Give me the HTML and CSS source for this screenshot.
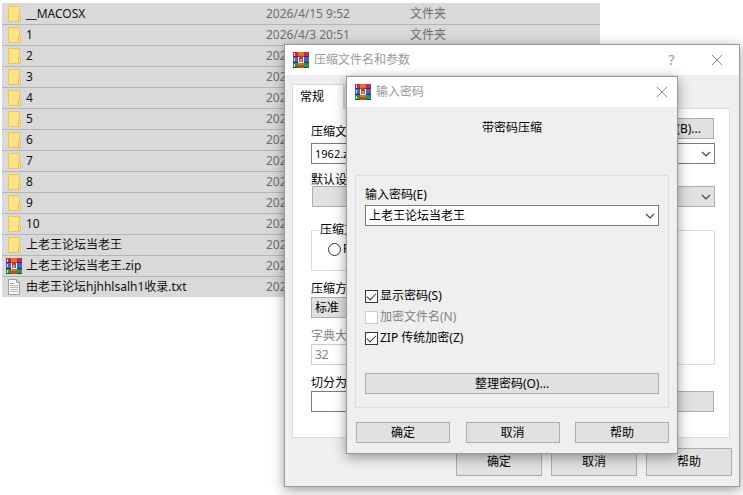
FILE: index.html
```html
<!DOCTYPE html>
<html lang="zh-CN">
<head>
    <meta charset="utf-8">
    <title>压缩文件名和参数</title>
    <link rel="stylesheet" href="styles.css">
</head>
<body>
    <svg class="defs" aria-hidden="true">
        <symbol id="folder" viewBox="0 0 16 16">
            <path d="M2.5 .5h11v9h1v6h-12z" fill="#fde38a" stroke="#efc64f"/>
            <path d="M12.5 15V10.5q0-1 1-1" fill="none" stroke="#e3b93f"/>
        </symbol>
        <symbol id="rar" viewBox="0 0 16 16">
            <rect width="16" height="5" fill="#c42a4c"/>
            <rect y="4" width="16" height="1" fill="#7d1535"/>
            <rect y="5" width="16" height="6" fill="#4462c8"/>
            <rect y="10" width="16" height="1" fill="#27305f"/>
            <rect y="11" width="16" height="5" fill="#27994a"/>
            <rect y="15" width="16" height="1" fill="#125a2c"/>
            <path d="M1 1h1v3H1zM1 6h1v3H1zM1 12h1v3H1z" fill="#e9d9c4"/>
            <rect x="5" width="6" height="16" fill="#e0702b"/>
            <rect x="5" y="13" width="6" height="3" fill="#a9561f"/>
            <rect x="5" y="4" width="6" height="7" fill="#a8452b"/>
            <path d="M5.500 5v5.500h5V5M8 7v3" fill="none" stroke="#fff"/>
        </symbol>
        <symbol id="txt" viewBox="0 0 16 16">
            <path d="M2.500 .5h8l3 3v12h-11z" fill="#fff" stroke="#9c9ca4"/>
            <path d="M10.500 .5v3h3" fill="none" stroke="#9c9ca4"/>
            <path d="M4 4.500h5M4 6.500h8M4 8.500h8M4 10.500h8M4 12.500h8" stroke="#b4b4ba"/>
        </symbol>
        <symbol id="close" viewBox="0 0 10 10">
            <path d="M0 0L10 10M10 0L0 10" stroke="#8c8c8c" fill="none"/>
        </symbol>
        <symbol id="chevron" viewBox="0 0 10 6">
            <path d="M1 1l4 4 4-4" stroke="#444" stroke-width="1.200" fill="none"/>
        </symbol>
    </svg>

    <div class="desktop">
        <div class="files">
            <table>
                <tr><td><span class="name"><svg><use href="#folder"/></svg>__MACOSX</span></td><td>2026/4/15 9:52</td><td>文件夹</td></tr>
                <tr><td><span class="name"><svg><use href="#folder"/></svg>1</span></td><td>2026/4/3 20:51</td><td>文件夹</td></tr>
                <tr><td><span class="name"><svg><use href="#folder"/></svg>2</span></td><td>202</td><td></td></tr>
                <tr><td><span class="name"><svg><use href="#folder"/></svg>3</span></td><td>202</td><td></td></tr>
                <tr><td><span class="name"><svg><use href="#folder"/></svg>4</span></td><td>202</td><td></td></tr>
                <tr><td><span class="name"><svg><use href="#folder"/></svg>5</span></td><td>202</td><td></td></tr>
                <tr><td><span class="name"><svg><use href="#folder"/></svg>6</span></td><td>202</td><td></td></tr>
                <tr><td><span class="name"><svg><use href="#folder"/></svg>7</span></td><td>202</td><td></td></tr>
                <tr><td><span class="name"><svg><use href="#folder"/></svg>8</span></td><td>202</td><td></td></tr>
                <tr><td><span class="name"><svg><use href="#folder"/></svg>9</span></td><td>202</td><td></td></tr>
                <tr><td><span class="name"><svg><use href="#folder"/></svg>10</span></td><td>202</td><td></td></tr>
                <tr><td><span class="name"><svg><use href="#folder"/></svg>上老王论坛当老王</span></td><td>202</td><td></td></tr>
                <tr><td><span class="name"><svg><use href="#rar"/></svg>上老王论坛当老王.zip</span></td><td>202</td><td></td></tr>
                <tr><td><span class="name"><svg><use href="#txt"/></svg>由老王论坛hjhhlsalh1收录.txt</span></td><td>202</td><td></td></tr>
            </table>
        </div>

        <section class="window archive">
            <header class="titlebar">
                <svg class="app-icon"><use href="#rar"/></svg>
                <span class="title">压缩文件名和参数</span>
                <button class="caption" type="button">?</button>
                <button class="caption" type="button" aria-label="关闭"><svg><use href="#close"/></svg></button>
            </header>
            <div class="archive-body">
                <div class="tabs">
                    <button class="tab active" type="button">常规</button>
                    <button class="tab" type="button" aria-label="高级"></button>
                </div>
                <div class="panel">
                    <div class="line browse-line">
                        <label for="archive-name">压缩文</label>
                        <button class="btn browse" type="button">(B)...</button>
                    </div>
                    <div class="combo">
                        <input id="archive-name" type="text" value="1962.z">
                        <button type="button" aria-label="展开"><svg><use href="#chevron"/></svg></button>
                    </div>
                    <div class="line profile-label">默认设</div>
                    <div class="line profiles">
                        <button class="btn" type="button" aria-label="配置"></button>
                        <div class="combo grey">
                            <input type="text" aria-label="更新方式" readonly>
                            <button type="button" aria-label="展开"><svg><use href="#chevron"/></svg></button>
                        </div>
                    </div>
                    <div class="columns">
                        <div class="left">
                            <fieldset class="format">
                                <legend>压缩文</legend>
                                <label><input type="radio" name="format">R</label>
                            </fieldset>
                            <label class="field-label" for="method">压缩方</label>
                            <select id="method" class="field grey"><option>标准</option></select>
                            <label class="field-label disabled" for="dict">字典大</label>
                            <select id="dict" class="field" disabled><option>32</option></select>
                        </div>
                        <div class="options"></div>
                    </div>
                    <label class="field-label" for="split">切分为</label>
                    <div class="line split-line">
                        <input id="split" class="field" type="text">
                        <button class="btn" type="button" aria-label="设置密码"></button>
                    </div>
                </div>
                <div class="actions">
                    <button class="btn" type="button">确定</button>
                    <button class="btn" type="button">取消</button>
                    <button class="btn" type="button">帮助</button>
                </div>
            </div>
        </section>

        <section class="window password">
            <header class="titlebar">
                <svg class="app-icon"><use href="#rar"/></svg>
                <span class="title">输入密码</span>
                <button class="caption" type="button" aria-label="关闭"><svg><use href="#close"/></svg></button>
            </header>
            <div class="password-body">
                <p class="heading">带密码压缩</p>
                <div class="group">
                    <label for="pwd">输入密码(E)</label>
                    <div class="combo">
                        <input id="pwd" type="text" value="上老王论坛当老王">
                        <button type="button" aria-label="展开"><svg><use href="#chevron"/></svg></button>
                    </div>
                    <div class="checks">
                        <label><input type="checkbox" checked>显示密码(S)</label>
                        <label class="disabled"><input type="checkbox" disabled>加密文件名(N)</label>
                        <label><input type="checkbox" checked>ZIP 传统加密(Z)</label>
                    </div>
                    <button class="btn organize" type="button">整理密码(O)...</button>
                </div>
                <div class="actions">
                    <button class="btn" type="button">确定</button>
                    <button class="btn" type="button">取消</button>
                    <button class="btn" type="button">帮助</button>
                </div>
            </div>
        </section>
    </div>
</body>
</html>
```
FILE: styles.css
```css
* { box-sizing: border-box; }
body { margin: 0; background: #fff; color: #000; font: 12px/16px "Noto Sans", "Noto Sans CJK SC", sans-serif; }
button, input, select { font: inherit; color: inherit; margin: 0; border-radius: 0; }
.defs { position: absolute; width: 0; height: 0; }
.desktop { position: relative; min-height: 495px; overflow: hidden; }

/* file list */
.files { padding: 3px 143px 0 2px; }
table { width: 100%; table-layout: fixed; border-spacing: 0; background: #d9d9d9; }
td { height: 21px; padding: 0; color: #6d6d6d; white-space: nowrap; border-top: 1px solid #b5b5b5; }
tr:first-child td { border-top-color: #d9d9d9; }
td:nth-child(1) { width: 264px; padding-left: 4px; color: #111; }
td:nth-child(2) { width: 144px; }
.name { display: flex; align-items: center; gap: 4px; }
.name svg { width: 16px; height: 16px; }

/* windows */
.window { position: absolute; background: #efefef; border: 1px solid #999; box-shadow: 0 3px 12px rgba(0, 0, 0, 0.4); }
.archive { left: 284px; top: 44px; width: 456px; }
.password { left: 346px; top: 76px; width: 332px; }
.titlebar { display: flex; align-items: center; height: 30px; padding-left: 8px; background: #fff; color: #999; }
.app-icon { width: 16px; height: 16px; margin-right: 5px; }
.title { flex: 1; }
.caption { width: 45px; height: 30px; padding: 0; border: 0; background: none; font-size: 14px; }
.caption svg { width: 10px; height: 10px; overflow: visible; }
.password .caption { width: 30px; }

/* controls */
.btn { height: 21px; padding: 0; line-height: 16px; background: #e1e1e1; border: 1px solid #adadad; }
.line { display: flex; align-items: center; }
.combo { display: flex; height: 21px; background: #fff; border: 1px solid #7a7a7a; }
.combo input { flex: 1; min-width: 0; padding: 0 3px; border: 0; background: none; outline: 0; }
.combo button { width: 17px; padding: 0 0 2px; border: 0; background: none; line-height: 8px; }
.combo svg { width: 10px; height: 6px; }
.grey, .combo.grey { background: #e1e1e1; border-color: #adadad; }
.field { display: block; width: 100%; height: 21px; padding: 0 3px; border: 1px solid #7a7a7a; background: #fff; appearance: none; }
.field.grey { background: #e1e1e1; border-color: #adadad; }
.field:disabled { color: #838383; border-color: #ccc; opacity: 1; }
.disabled { color: #838383; }
fieldset { margin: 0; min-width: 0; border: 1px solid #dcdcdc; }

/* archive dialog */
.archive-body { padding: 9px 7px 10px; }
.tabs { display: flex; align-items: flex-end; }
.tab { width: 52px; height: 22px; padding: 0 7px; text-align: left; background: #f0f0f0; border: 1px solid #d9d9d9; border-bottom: 0; }
.tab.active { height: 25px; margin-bottom: -1px; background: #fff; position: relative; }
.panel { margin-right: 2px; padding: 9px 14px 25px 18px; background: #fff; border: 1px solid #dcdcdc; }
.browse-line { justify-content: space-between; height: 21px; margin-bottom: 4px; padding-top: 6px; }
.browse { width: 86px; margin: -6px 1px 0 0; padding-right: 12px; text-align: right; }
#archive-name { font-size: 11px; }
.profile-label { height: 22px; padding-top: 10px; }
.profiles { gap: 9px; }
.profiles .btn { width: 130px; margin-left: 1px; }
.profiles .combo { flex: 1; }
.columns { display: flex; gap: 10px; margin-top: 23px; }
.left { width: 150px; }
.options { flex: 1; border: 1px solid #dcdcdc; }
.format { height: 49px; margin-top: -8px; padding: 3px 16px; }
.format legend { padding: 0 1px; margin-left: -9px; }
.format label { display: flex; align-items: center; gap: 2px; }
input[type="radio"] { appearance: none; width: 13px; height: 13px; background: #fff; border: 1px solid #333; border-radius: 50%; }
.field-label { display: block; height: 26px; padding-top: 10px; }
.split-line { justify-content: space-between; }
.split-line .field { width: 150px; }
.split-line .btn { width: 200px; margin-right: 1px; }
.actions { display: flex; justify-content: flex-end; }
.archive .actions { gap: 9px; margin-top: 10px; }
.archive .actions .btn { width: 86px; height: 28px; }

/* password dialog */
.password-body { padding: 13px 8px 10px; }
.heading { margin: 0 0 39px; text-align: center; }
.group { padding: 11px 9px 13px; border: 1px solid #dcdcdc; }
.group > label { display: block; margin-bottom: 2px; }
.checks { display: grid; gap: 5px; margin: 62px 0 27px; }
.checks label { display: flex; align-items: center; gap: 2px; }
input[type="checkbox"] { appearance: none; width: 13px; height: 13px; background: #fff; border: 1px solid #333; }
input[type="checkbox"]:checked::after { content: ""; display: block; width: 8px; height: 4px; margin: 2px 1px; border: solid #333; border-width: 0 0 1px 1px; transform: rotate(-45deg); }
input[type="checkbox"]:disabled { border-color: #ccc; }
.organize { display: block; width: 100%; }
.password .actions { justify-content: space-between; margin: 14px 0 0 1px; }
.password .actions .btn { width: 94px; }
```
